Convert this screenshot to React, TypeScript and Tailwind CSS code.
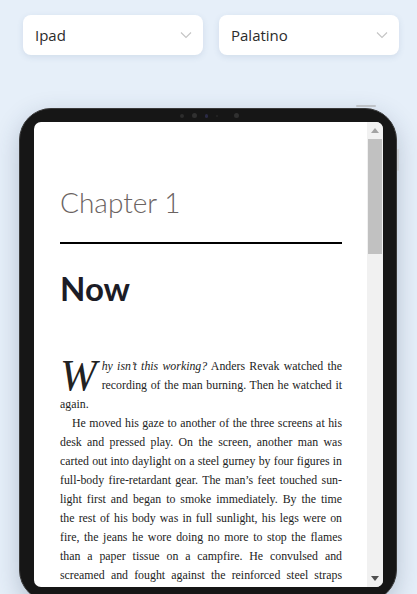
import React from 'react';

const serif = { fontFamily: '"Liberation Serif", "Times New Roman", serif' };
const display = { fontFamily: 'Lato, "Open Sans", sans-serif' };

function Select({ value }: { value: string }) {
  return (
    <div className="flex h-10 w-[180px] items-center justify-between rounded-lg bg-white pl-3 pr-[11px] shadow-[0_2px_6px_rgba(60,90,130,0.12)]">
      <span className="text-[15px] text-[#2b2b2b]" style={{ fontFamily: '"Open Sans", sans-serif' }}>
        {value}
      </span>
      <svg width="12" height="8" viewBox="0 0 12 8" fill="none">
        <path d="M1 1.5l5 5 5-5" stroke="#c4c4c4" strokeWidth="1.1" />
      </svg>
    </div>
  );
}

function Camera() {
  return (
    <div className="absolute left-[160px] top-[4px] flex items-center gap-[8px]">
      <span className="h-[4px] w-[4px] rounded-full bg-[#2c2c2c]" />
      <span className="h-[5px] w-[5px] rounded-full bg-[#303030]" />
      <span className="h-[4px] w-[3px] rounded-full bg-[#2a2a44]" />
      <span className="h-[2px] w-[2px] rounded-full bg-[#262626]" />
      <span className="ml-[8px] h-[5px] w-[5px] rounded-full bg-[#303030]" />
    </div>
  );
}

function Scrollbar() {
  return (
    <div className="flex w-[16px] shrink-0 flex-col items-center bg-[#f1f1f1]">
      <div className="flex h-[17px] w-full items-center justify-center">
        <svg width="8" height="5" viewBox="0 0 8 5">
          <path d="M4 0L8 5H0z" fill="#a3a3a3" />
        </svg>
      </div>
      <div className="h-[115px] w-[14px] bg-[#c1c1c1]" />
      <div className="flex-1" />
      <div className="flex h-[17px] w-full items-center justify-center">
        <svg width="8" height="5" viewBox="0 0 8 5">
          <path d="M0 0H8L4 5z" fill="#505050" />
        </svg>
      </div>
    </div>
  );
}

export default function App() {
  return (
    <div className="min-h-screen overflow-hidden bg-[#e6eff9]">
      <div className="flex gap-4 pl-[23px] pt-[15px]">
        <Select value="Ipad" />
        <Select value="Palatino" />
      </div>

      <div className="relative ml-[19px] mt-[53px] w-[378px] rounded-[32px] border border-[#3a3a3a] bg-[#161616] pb-[14px] pl-[14px] pr-[13px] pt-[13px] shadow-[0_8px_24px_rgba(40,60,90,0.25)]">
        <Camera />
        {/* hardware buttons along the edge */}
        <span className="absolute right-[20px] top-[-4px] h-[2px] w-[20px] rounded-sm bg-[#bfc3c8]" />
        <span className="absolute right-[-3px] top-[40px] h-[22px] w-[2px] rounded-sm bg-[#c8ccd1]" />

        <div className="flex h-[465px] overflow-hidden rounded-[7px] bg-white">
          <div className="min-w-0 flex-1 overflow-hidden pl-[26px] pr-[25px] pt-[62px] text-[#1a1a1a]">
            <h1 className="text-[28px] leading-[36px] text-[#6b6361]" style={{ ...display, fontWeight: 300 }}>
              Chapter 1
            </h1>
            <div className="mt-[22px] h-[2px] bg-black" />
            <h2 className="mt-[22px] text-[33px] leading-[44px] text-[#1c1c26]" style={{ ...display, fontWeight: 700 }}>
              Now
            </h2>

            <div className="mt-[47px] text-justify text-[11.85px] leading-[19px] text-[#222]" style={serif}>
              <p>
                <span className="float-left mr-[5px] mt-[1px] text-[44px] italic leading-[36px]">W</span>
                <em>hy isn’t this working?</em> Anders Revak watched the recording of the man burning. Then he
                watched it again.
              </p>
              <p className="indent-[12px]">
                He moved his gaze to another of the three screens at his desk and pressed play. On the screen,
                another man was carted out into daylight on a steel gurney by four figures in full-body
                fire-retardant gear. The man’s feet touched sun{'\u00AD'}light first and began to smoke immediately.
                By the time the{'\u00A0'}rest of his body was in full sunlight, his legs were on fire, the jeans he
                wore doing no more to stop the flames than a paper tissue on a campfire. He convulsed and screamed
                and fought against the reinforced steel straps that{'\u00A0'}held him down, his body arching off
                the gurney as the fire spread up his torso and over his chest.
              </p>
            </div>
          </div>
          <Scrollbar />
        </div>
      </div>
    </div>
  );
}
